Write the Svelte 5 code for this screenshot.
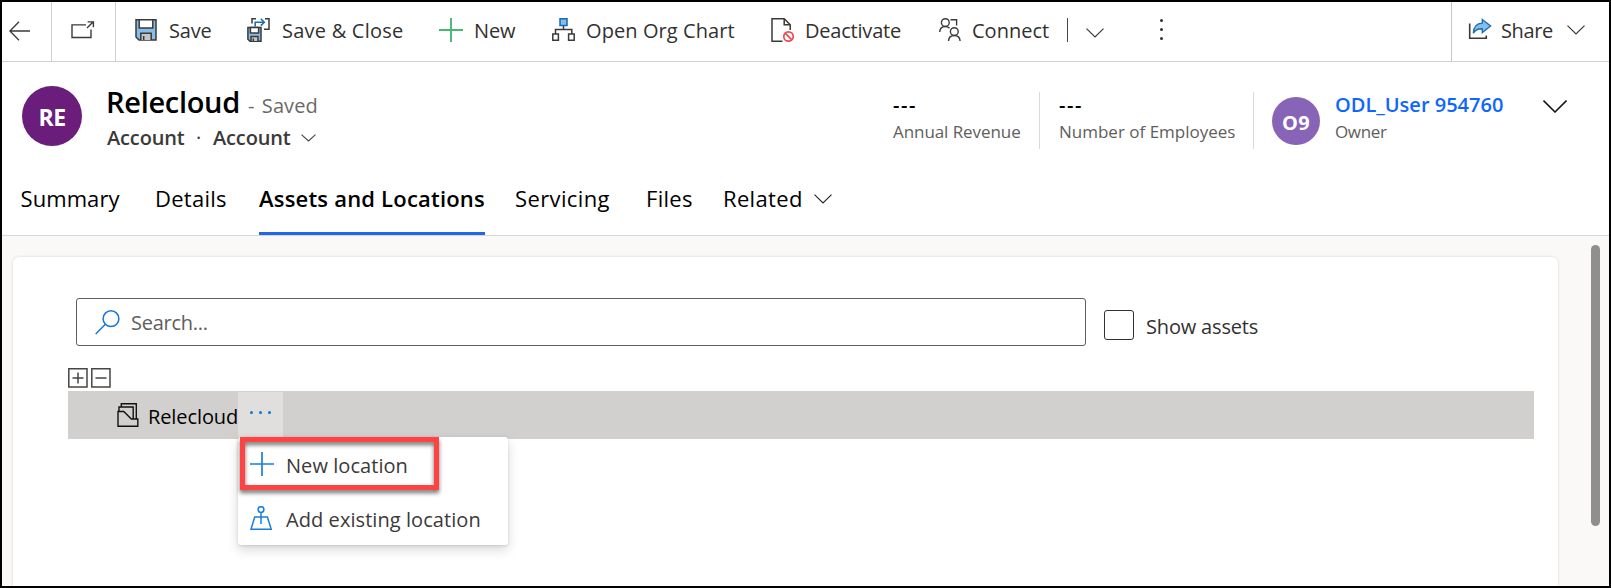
<script>
  const commands = [
    { id: 'save', label: 'Save' },
    { id: 'saveclose', label: 'Save & Close' },
    { id: 'new', label: 'New' },
    { id: 'org', label: 'Open Org Chart' },
    { id: 'deactivate', label: 'Deactivate' },
    { id: 'connect', label: 'Connect' }
  ];
  const tabs = [
    { id: 'summary', label: 'Summary' },
    { id: 'details', label: 'Details' },
    { id: 'assets', label: 'Assets and Locations' },
    { id: 'servicing', label: 'Servicing' },
    { id: 'files', label: 'Files' },
    { id: 'related', label: 'Related' }
  ];
  let active = $state('assets');
</script>

{#snippet chevron(w, h, color, stroke)}
  <svg class="chevron" width={w} height={h} viewBox="0 0 {w} {h}" fill="none" stroke={color} stroke-width={stroke}>
    <path d="M.5 .6 {w / 2} {h - 1} {w - 0.5} .6" />
  </svg>
{/snippet}

{#snippet icon(id)}
  <svg width="24" height="24" viewBox="0 0 24 24" fill="none" stroke="#3b3a39" stroke-width="1.5">
    {#if id === 'save'}
      <path d="M2 1.8H22V22H5L2 19z" fill="#83beec" />
      <path d="M5.2 1.8H18.8V10H5.2z" fill="#fff" />
      <path d="M6.8 22V15.2H17.2V22" fill="#c8c6c4" />
      <path d="M9.7 22V18" />
    {:else if id === 'saveclose'}
      <path d="M5 5.5V.8H9M18 .8H22V11.3H17" />
      <path d="M8.2 8.5V4.2H17M13.8 .8 17.3 4.2 13.8 7.6" stroke="#1b6fb5" stroke-width="1.6" />
      <path d="M.9 9.6H14V23.2H3L.9 21.2z" fill="#83beec" />
      <path d="M3.4 9.6H11.6V15H3.4z" fill="#fff" />
      <path d="M4 23V18.6H11V23" fill="#c8c6c4" />
      <path d="M6.3 23V20.5" />
    {:else if id === 'new'}
      <path d="M12 0V24M0 12H24" stroke="#47b874" stroke-width="1.9" />
    {:else if id === 'org'}
      <path d="M11.5 8V11.2M3.5 16V11.5H19.8V16" />
      <path d="M8 .8H15V7.5H8z" fill="#83beec" stroke="#1769b0" />
      <path d="M.8 16H6.4V22.2H.8zM16.6 16H22.2V22.2H16.6z" fill="#fff" />
    {:else if id === 'deactivate'}
      <path d="M11.5 23.2H1V.8H13.2L19.2 6.8V12" />
      <path d="M13.2 .8V6.8H19.2" />
      <g stroke="#f04a51" stroke-width="1.7"><circle cx="17.5" cy="18.5" r="4.7" /><path d="M14.2 15.2 20.8 21.8" /></g>
    {:else if id === 'connect'}
      <g stroke-width="1.4">
        <circle cx="6.3" cy="4.6" r="3.9" />
        <path d="M.7 14C.9 10.600 3 8.500 6.300 8.500 8.100 8.500 9.500 9.200 10.500 10.200M11.500 1.800H17.600V7.500" />
        <circle cx="15.300" cy="13.600" r="3.900" />
        <path d="M9.500 23C9.700 19.600 12 17.500 15.300 17.500 18.600 17.500 20.900 19.600 21.100 23" />
      </g>
    {/if}
  </svg>
{/snippet}

<div class="frame">
  <header class="toolbar">
    <button class="cell back" aria-label="Back">
      <svg width="22" height="20" viewBox="0 0 22 20" fill="none" stroke="#3b3a39" stroke-width="1.3"><path d="M10 .7.900 10 10 19.300M1 10H21" /></svg>
    </button>
    <button class="cell popout" aria-label="Open in new window">
      <svg width="24" height="18" viewBox="0 0 24 18" fill="none" stroke="#3b3a39" stroke-width="1.4"><path d="M15 3.900H1V16.500H20V8.500M16 7 22 1M16.600 .9H22.400V6.300" /></svg>
    </button>
    <nav class="commands">
      {#each commands as c}
        <button class="cmd {c.id}">{@render icon(c.id)}<span>{c.label}</span></button>
      {/each}
      <i class="split"></i>
      <button class="more-connect" aria-label="More connect options">{@render chevron(18, 10, '#3b3a39', 1.2)}</button>
      <button class="overflow" aria-label="More commands"><i></i><i></i><i></i></button>
    </nav>
    <button class="share">
      <svg width="24" height="24" viewBox="0 0 24 24" fill="none">
        <path d="M1.700 5.500V20.200H18.300V17.500" stroke="#3b3a39" stroke-width="1.600" />
        <path d="M14.300 1.500 22.600 8 14.300 14.500V10.800C9.800 10.600 7.200 12 5.400 15.200 5.500 9.600 8.300 5.400 14.300 5.100z" fill="#83beec" stroke="#1b6fb5" stroke-width="1.400" />
      </svg>
      <span>Share</span>
      {@render chevron(18, 10, '#3b3a39', 1.2)}
    </button>
  </header>

  <section class="record">
    <div class="avatar big">RE</div>
    <div class="identity">
      <div class="title"><h1>Relecloud</h1><span>- Saved</span></div>
      <div class="kind">
        <span>Account</span><b>·</b><span class="form">Account</span>
        {@render chevron(15, 8, '#484644', 1.1)}
      </div>
    </div>
    <div class="stats">
      <div class="stat revenue"><strong>---</strong><small>Annual Revenue</small></div>
      <div class="stat employees"><strong>---</strong><small>Number of Employees</small></div>
      <div class="owner">
        <div class="avatar small">O9</div>
        <div class="who"><a href="#owner">ODL_User 954760</a><small>Owner</small></div>
        {@render chevron(24, 13, '#111', 1.5)}
      </div>
    </div>
  </section>

  <nav class="tabs">
    {#each tabs as t}
      <button class="tab {t.id}" class:active={active === t.id} onclick={() => (active = t.id)}>
        <span>{t.label}</span>
        {#if t.id === 'related'}{@render chevron(18, 10, '#222', 1.1)}{/if}
      </button>
    {/each}
  </nav>

  <main>
    <div class="card">
      <div class="filter">
        <label class="search">
          <svg width="25" height="25" viewBox="0 0 25 25" fill="none" stroke="#1477d6" stroke-width="1.500"><circle cx="16" cy="8.700" r="7.900" /><path d="M10.400 14.300 .7 24" /></svg>
          <span>Search...</span>
        </label>
        <label class="assets-toggle"><i></i><span>Show assets</span></label>
      </div>

      <div class="expanders">
        <button aria-label="Expand all"><svg width="20" height="20" viewBox="0 0 20 20" fill="none" stroke="#484644" stroke-width="1.500"><path d="M.8 .8H19V19H.8zM4.500 10H15.500M10 4.500V15.500" /></svg></button>
        <button aria-label="Collapse all"><svg width="20" height="20" viewBox="0 0 20 20" fill="none" stroke="#484644" stroke-width="1.500"><path d="M.8 .8H19V19H.8zM4.500 10H15.500" /></svg></button>
      </div>

      <div class="row">
        <svg class="node" width="22" height="24" viewBox="0 0 22 24" fill="none" stroke="#111" stroke-width="1.400"><path d="M1 8.500H6.800L14.300 16H20.800V23.200H1zM2 8.500V4H16.200V16M4.300 4V.8H19.300V16" /></svg>
        <span>Relecloud</span>
        <div class="actions">
          <button class="dots" aria-label="More actions"><i></i><i></i><i></i></button>
          <div class="menu">
            <div class="item">
              <svg width="24" height="24" viewBox="0 0 24 24" fill="none" stroke="#1a7fd9" stroke-width="1.700"><path d="M12 0V24M0 12H24" /></svg>
              <span class="create">New location</span>
            </div>
            <div class="item">
              <svg width="24" height="24" viewBox="0 0 24 24" fill="none" stroke="#1a7fd9" stroke-width="1.500"><circle cx="11" cy="3.600" r="2.900" /><path d="M11 6.500V18M4.700 11H17.400L21.200 23.200H1z" /></svg>
              <span class="existing">Add existing location</span>
            </div>
            <div class="highlight"></div>
          </div>
        </div>
      </div>
    </div>
    <div class="scrollbar"></div>
  </main>
</div>

<style>
  :global(body) { margin: 0; background: #fff; }
  .frame { box-sizing: border-box; width: 1611px; height: 588px; border: 2px solid #000; background: #fff; display: flex; flex-direction: column; overflow: hidden; font: 20px/28px "Open Sans", "Noto Sans", sans-serif; color: #323130; }
  .frame * { box-sizing: border-box; white-space: nowrap; }
  button { font: inherit; color: inherit; border: 0; background: none; padding: 0; margin: 0; text-align: left; letter-spacing: inherit; }
  svg { display: block; flex: none; }
  i { display: block; }

  .toolbar { display: flex; height: 60px; flex: none; border-bottom: 1px solid #d2d0ce; }
  .cell { border-right: 1px solid #d2d0ce; display: flex; align-items: center; }
  .back { width: 50px; padding: 0 0 2px 7px; }
  .popout { width: 64px; padding: 0 0 3px 19px; }
  .commands { display: flex; align-items: center; padding: 0 0 3px 18px; flex: 1; }
  .cmd { display: flex; align-items: center; gap: 11px; margin-right: 36px; flex: none; }
  .cmd span { padding-top: 2px; }
  .cmd.save span { width: 42px; letter-spacing: -.19px; }
  .cmd.saveclose span { width: 121px; letter-spacing: .23px; }
  .cmd.new span { width: 42px; letter-spacing: -.14px; }
  .cmd.org { gap: 10px; }
  .cmd.org span { width: 149px; letter-spacing: .08px; }
  .cmd.deactivate { gap: 10px; }
  .cmd.deactivate span { width: 98px; letter-spacing: -.21px; }
  .cmd.connect { gap: 9px; margin-right: 17px; }
  .cmd.connect span { width: 78px; }
  .split { width: 1px; height: 24px; background: #484644; }
  .more-connect { margin: 5px 0 0 18px; }
  .overflow { display: flex; flex-direction: column; gap: 6px; margin-left: 56px; margin-top: -1px; }
  .overflow i { width: 3px; height: 3px; border-radius: 50%; background: #323130; }
  .share { width: 158px; border-left: 1px solid #c8c6c4; display: flex; align-items: center; padding: 0 0 2px 16px; }
  .share svg:first-child { margin-top: -2px; }
  .share span { width: 66px; margin-left: 9px; letter-spacing: -.38px; padding-top: 1px; }
  .share .chevron { margin-top: -2px; }

  .record { display: flex; height: 110px; flex: none; padding: 22px 0 0 20px; }
  .avatar { border-radius: 50%; color: #fff; font-weight: 700; display: flex; align-items: center; justify-content: center; flex: none; }
  .big { width: 60px; height: 60px; margin-top: 2px; background: #6b1d7b; font-size: 23px; letter-spacing: -.6px; padding: 2px 0 0 0; }
  .identity { margin-left: 25px; }
  .title { display: flex; align-items: baseline; height: 36px; margin-left: -1px; color: #000; }
  h1 { margin: 0; width: 142px; font: 600 29px/36px "Open Sans", sans-serif; letter-spacing: -.3px; }
  .title span { color: #6b6967; word-spacing: 2px; letter-spacing: .1px; }
  .kind { display: flex; align-items: center; margin-top: 3px; font-weight: 600; color: #3b3a39; letter-spacing: -.15px; }
  .kind span { width: 89px; }
  .kind b { width: 17px; font-weight: 400; }
  .kind .form { width: 88px; padding-top: 1px; }

  .stats { display: flex; margin-left: auto; padding-top: 6px; }
  .stat { height: 57px; margin-top: 2px; border-right: 1px solid #dcdad8; display: flex; flex-direction: column; }
  .stat strong, .who a { font-weight: 600; line-height: 29px; display: block; }
  .stat strong { color: #000; letter-spacing: 1.6px; margin-top: -2px; }
  small { display: block; font-size: 17px; line-height: 25px; color: #605e5c; }
  .revenue { width: 147px; }
  .revenue small { letter-spacing: -.07px; }
  .employees { width: 214px; padding-left: 19px; }
  .owner { display: flex; padding-left: 18px; align-items: flex-start; padding-right: 42px; }
  .small { width: 48px; height: 48px; margin-top: 7px; background: #8764b8; font-size: 20px; padding-top: 3px; letter-spacing: .4px; }
  .who { margin-left: 15px; width: 208px; }
  .who a { color: #0d66ff; text-decoration: none; padding-top: 1px; line-height: 28px; }
  .who small { letter-spacing: -.35px; }
  .owner .chevron { margin-top: 10px; }

  .tabs { display: flex; gap: 30px; height: 64px; flex: none; border-bottom: 1px solid #d8d6d4; padding-left: 18.5px; font-size: 22px; line-height: 30px; color: #000; }
  .tab { height: 63px; padding-bottom: 12px; display: flex; align-items: center; flex: none; }
  .tab.active { font-weight: 600; border-bottom: 3px solid #2266e3; padding-bottom: 9px; }
  .summary { width: 104.500px; letter-spacing: .08px; }
  .details { width: 74px; letter-spacing: .25px; }
  .assets { width: 226px; letter-spacing: .2px; }
  .servicing { width: 101px; letter-spacing: .38px; }
  .files { width: 47px; letter-spacing: .3px; }
  .related { letter-spacing: .33px; }
  .related span { width: 91px; }
  .related .chevron { margin-top: 3px; }

  main { flex: 1; display: flex; background: #faf9f8; }
  .card { width: 1545px; margin: 21px 0 0 11px; background: #fff; border-radius: 6px 6px 0 0; box-shadow: 0 0 3px rgba(0, 0, 0, .15); padding: 41px 0 0 55px; }
  .scrollbar { width: 9px; height: 281px; border-radius: 5px; background: #8f8f8d; margin: 9px 0 0 33px; }
  .filter { display: flex; align-items: center; height: 48px; padding-left: 8px; }
  .search { width: 1010px; height: 48px; border: 1px solid #605e5c; border-radius: 3px; display: flex; align-items: center; padding-left: 18px; color: #605e5c; }
  .search span { margin-left: 11px; padding-top: 2px; letter-spacing: -.25px; }
  .assets-toggle { display: flex; align-items: center; margin: 6px 0 0 18px; }
  .assets-toggle i { width: 30px; height: 30px; border: 1px solid #323130; border-radius: 3px; }
  .assets-toggle span { margin-left: 12px; letter-spacing: -.17px; padding-top: 3px; }
  .expanders { display: flex; gap: 3px; margin-top: 22px; height: 23px; }
  .expanders button { height: 20px; }
  .row { width: 1466px; height: 48px; background: #d2d0ce; display: flex; align-items: center; padding-left: 49px; color: #000; }
  .row > span { width: 90px; margin-left: 9px; padding-top: 4px; letter-spacing: -.1px; }
  .actions { position: relative; height: 46px; width: 45px; }
  .dots { display: flex; width: 45px; height: 45px; background: #e1dfdd; justify-content: center; gap: 6px; padding-top: 19px; }
  .dots i { width: 3px; height: 3px; border-radius: 50%; background: #0f78d4; }
  .menu { position: absolute; left: 0; top: 45px; width: 270px; height: 108px; background: #fff; border-radius: 3px; box-shadow: 0 5px 12px rgba(0, 0, 0, .15), 0 1px 3px rgba(0, 0, 0, .12); color: #3b3a39; }
  .item { height: 54px; display: flex; align-items: center; gap: 12px; padding-left: 12px; }
  .create { letter-spacing: .06px; padding-top: 3px; }
  .existing { letter-spacing: .07px; padding-top: 3px; }
  .highlight { position: absolute; left: 2px; top: 0; width: 199px; height: 53px; border: 5px solid #ff4343; filter: drop-shadow(0 3px 2px rgba(0, 0, 0, .55)); }
</style>
